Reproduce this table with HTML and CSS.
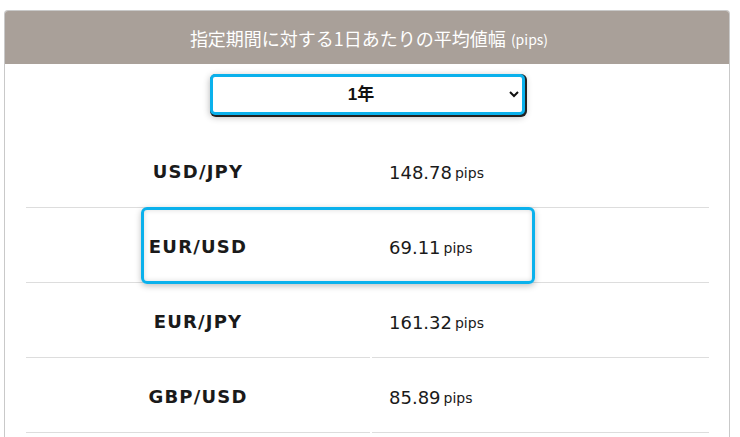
FILE: index.html
```html
<!DOCTYPE html>
<html lang="ja">
  <head>
    <meta charset="UTF-8" />
    <meta name="viewport" content="width=device-width, initial-scale=1.0" />
    <title>平均値幅</title>
    <link rel="stylesheet" href="styles.css">
  </head>
  <body>
    <div class="card">
      <div class="card-head">指定期間に対する1日あたりの平均値幅<span class="unit">(pips)</span></div>

      <div class="period">
        <select class="period-select">
          <option>1年</option>
          <option>6ヶ月</option>
          <option>3ヶ月</option>
          <option>1ヶ月</option>
        </select>
      </div>

      <div class="rates">
        <div class="pair">USD/JPY</div>
        <div class="value">148.78 <small>pips</small></div>

        <div class="pair">EUR/USD</div>
        <div class="value">69.11 <small>pips</small></div>

        <div class="pair">EUR/JPY</div>
        <div class="value">161.32 <small>pips</small></div>

        <div class="pair">GBP/USD</div>
        <div class="value">85.89 <small>pips</small></div>

        <!-- highlight frame around the EUR/USD row -->
        <div class="mark"></div>
      </div>
    </div>
  </body>
</html>
```

FILE: styles.css
```css
:root {
  --head-bg: #a9a099;
  --line-color: #dddddd;
  --card-border: #c9c9c9;
  --mark-color: #0bb1ec;
  --text-color: #1a1a1a;
}
body {
  margin: 0;
  padding: 10px 10px 0 4px;
  background: #fff;
  font-family: "DejaVu Sans", Verdana, sans-serif;
  color: var(--text-color);
}

.card {
  border: 1px solid var(--card-border);
  border-bottom: none;
  border-radius: 4px 4px 0 0;
  height: 440px;
  overflow: hidden;
}
.card-head {
  background: var(--head-bg);
  color: #fff;
  height: 53px;
  display: flex;
  align-items: center;
  justify-content: center;
  font-family: "Noto Sans CJK JP", sans-serif;
  font-size: 18px;
  padding-left: 4px;
}
.card-head .unit {
  font-size: 14px;
  margin-left: 5px;
  padding-top: 2px;
}

.period {
  display: flex;
  justify-content: center;
  padding: 10px 0 0 0;
}
.period-select {
  width: 315px;
  height: 41px;
  border: 3px solid var(--mark-color);
  border-radius: 5px;
  box-shadow: 1px 1px 0 1px #222, 0 2px 7px rgba(0, 0, 0, 0.3);
  background: #fff;
  font-family: "Liberation Sans", Arial, "Noto Sans CJK JP", sans-serif;
  font-size: 17px;
  font-weight: bold;
  color: #111;
  text-align: center;
  text-align-last: center;
}

.rates {
  position: relative;
  display: grid;
  grid-template-columns: 344px 337px;
  column-gap: 2px;
  margin: 18px 0 0 21px;
}
.rates > .pair,
.rates > .value {
  height: 75px;
  border-bottom: 1px solid var(--line-color);
  display: flex;
  align-items: center;
  box-sizing: border-box;
}
.pair {
  justify-content: center;
  font-weight: bold;
  font-size: 18px;
  letter-spacing: 1.2px;
  padding-top: 2px;
}
.value {
  padding-left: 17px;
  font-size: 18px;
  padding-top: 4px;
}
.value small {
  font-size: 14px;
  margin-left: 3px;
  padding-top: 2px;
}

.mark {
  position: absolute;
  left: 115px;
  top: 74px;
  width: 388px;
  height: 71px;
  border: 3px solid var(--mark-color);
  border-radius: 6px;
  box-shadow: 0 2px 6px rgba(0, 0, 0, 0.25), inset 0 0 5px rgba(0, 0, 0, 0.15);
}
```
